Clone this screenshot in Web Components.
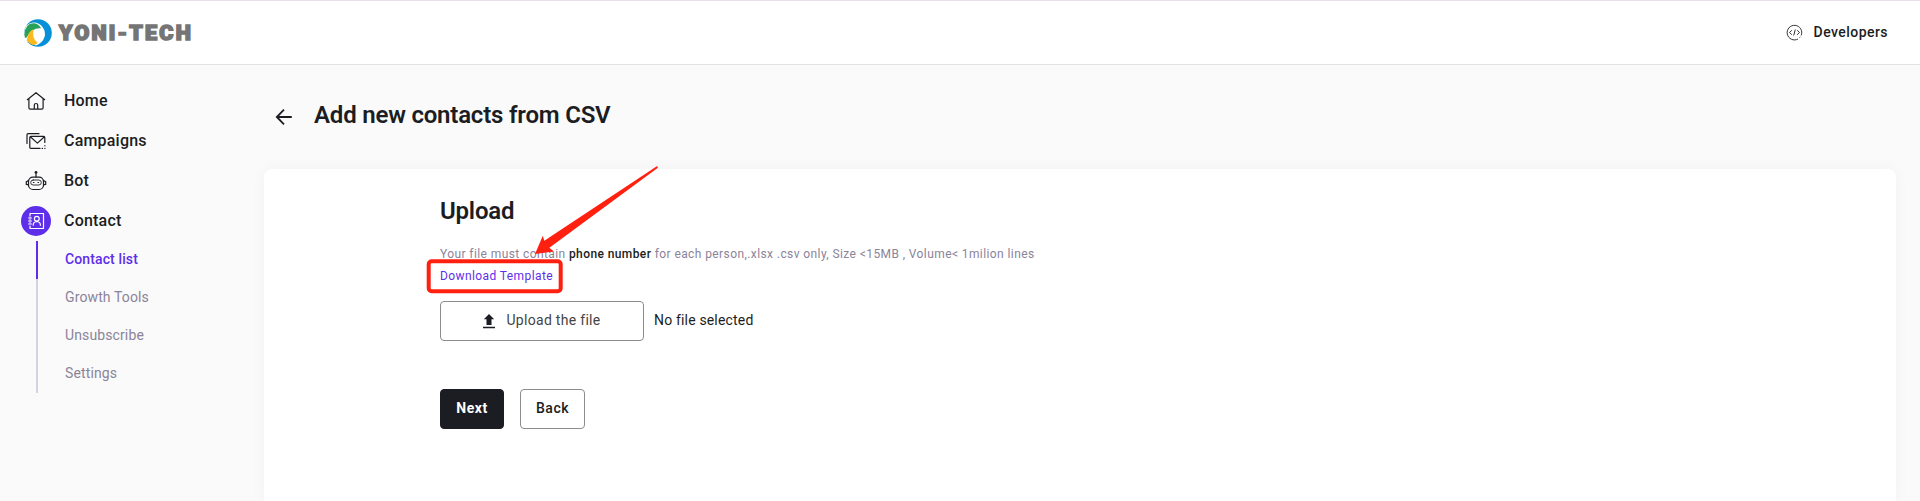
<!DOCTYPE html>
<html lang="en">
<head>
<meta charset="utf-8">
<title>Add new contacts from CSV</title>
<style>
  :root {
    --ink: #1b1d22;
    --muted: #8a8499;
    --purple: #5f2eea;
    --line: #8c8c8c;
    --red: #ff2010;
  }
  html, body { height: 100%; }
  body {
    margin: 0;
    overflow: hidden;
    background: #fafafa;
    color: var(--ink);
    font-family: Roboto, sans-serif;
  }
</style>
</head>
<body>
<app-shell>
  <top-bar slot="header"></top-bar>
  <side-nav slot="nav">
    <nav-item icon="home">Home</nav-item>
    <nav-item icon="mail">Campaigns</nav-item>
    <nav-item icon="bot">Bot</nav-item>
    <nav-item icon="contact" active>Contact</nav-item>
    <sub-nav>
      <sub-item active>Contact list</sub-item>
      <sub-item>Growth Tools</sub-item>
      <sub-item>Unsubscribe</sub-item>
      <sub-item>Settings</sub-item>
    </sub-nav>
  </side-nav>
  <page-title>Add new contacts from CSV</page-title>
  <upload-panel></upload-panel>
</app-shell>

<script>
const icons = {
  home: `<svg width="20" height="20" viewBox="0 0 20 20"><path d="M1.3 8.7 10 1.7l8.7 7M2.9 7.6v9.1q0 1.4 1.4 1.4h11.4q1.4 0 1.4-1.4V7.6M8.3 18v-4q0-1.5 1.7-1.5t1.7 1.5v4"/></svg>`,
  mail: `<svg width="20" height="20" viewBox="0 0 20 20"><path d="M1 12.5V3.8Q1 2.7 2.1 2.7H13M14 17.4H4.9q-1.1 0-1.1-1.1V6.5q0-1.1 1.1-1.1h12.8q1.1 0 1.1 1.1v5M4.3 5.8l7.1 6.3 7-6.3"/><path stroke-dasharray=".3 2.4" d="M16.2 17.4h2.8M18.9 14.5v.3"/></svg>`,
  bot: `<svg width="22" height="20" viewBox="0 0 22 20"><rect x="3.5" y="6.2" width="15" height="12.3" rx="4.5"/><rect x="5.7" y="9" width="10.6" height="5" rx="2.5" stroke-width=".9"/><path d="M11 6V3M1.3 10.5v3M20.7 10.5v3M2.2 10.3l1.2-.8M19.8 10.3l-1.2-.8M2.2 13.7h1M19.8 13.7h-1"/><circle cx="11" cy="1.5" r="1.4" fill="currentColor" stroke="none"/><path d="M8.4 11.5h.5M13 11.5h.5"/></svg>`,
  contact: `<svg width="18" height="18" viewBox="0 0 18 18"><path d="M3 3.5V1.5h13.5v15H3v-2.5"/><path stroke-width="1" d="M1.5 6h3M1.5 9h3M1.5 12h3M3 4.7v.7M3 7.2v.8M3 10v1"/><circle cx="9.8" cy="6.8" r="2.4"/><path d="M6.2 13.2q0-3.4 3.6-3.7 3.6.3 3.6 3.7"/></svg>`
};

function define(name, html, setup) {
  customElements.define(name, class extends HTMLElement {
    constructor() {
      super();
      this.attachShadow({ mode: "open" });
    }

    connectedCallback() {
      this.shadowRoot.innerHTML = html;
      if (setup) setup(this, this.shadowRoot);
    }
  });
}

define("app-shell", `
  <style>
    :host { display: grid; grid-template: 65px 1fr / 264px 1fr; height: 100vh; }
    .header { grid-column: 1 / -1; }
    main { display: flex; flex-direction: column; min-height: 0; padding-right: 24px; }
  </style>
  <div class="header"><slot name="header"></slot></div>
  <slot name="nav"></slot>
  <main><slot></slot></main>
`);

define("brand-logo", `
  <style>
    :host { display: block; height: 30px; }
    svg { display: block; }
    text { font: 900 19.5px Roboto, sans-serif; letter-spacing: 2px; fill: #757575; stroke: #757575; stroke-width: 1.5; }
  </style>
  <svg width="172" height="30" viewBox="0 0 172 30">
    <circle cx="14" cy="15" r="13.8" fill="#0790d8"/>
    <path d="M0 15.5Q1 5 9 4.500q6-.3 9.500 4.500 3.500 5 2 10-2 6-8.500 8.500L0 22z" fill="#fff"/>
    <path d="M.3 16.5Q1.500 5.500 9 5.300q5.500 0 8 5Q9 9 2.500 19.500L1 20z" fill="#27a258"/>
    <path d="M2.700 22.500Q4 13 9.600 11.300 7.500 20 13.500 25q-1.500 2-4.500 2Q5 26 2.700 22.500z" fill="#fbb91c"/>
    <text x="35" y="22" textLength="134" lengthAdjust="spacingAndGlyphs">YONI-TECH</text>
  </svg>
`);

define("top-bar", `
  <style>
    :host {
      display: flex;
      align-items: center;
      justify-content: space-between;
      box-sizing: border-box;
      height: 65px;
      padding: 0 32px 0 24px;
      background: #fff;
      border-top: 1px solid #e8deee;
      border-bottom: 1px solid #e2e2e2;
    }
    .dev { display: flex; align-items: center; gap: 11px; font-size: 14px; font-weight: 500; letter-spacing: .45px; }
    .dev span { padding-bottom: 1px; }
    svg { fill: none; stroke: #333; display: block; }
  </style>
  <brand-logo></brand-logo>
  <div class="dev">
    <svg width="17" height="17" viewBox="0 0 17 17"><path d="M12 15a7.3 7.3 0 1 1 3.2-3.6M14.3 12.8l-.7.8"/><path d="M5.8 6.3 3.5 8.5l2.3 2.2M11.2 6.3l2.3 2.2-2.3 2.2M9.3 5.5l-1.6 6"/></svg>
    <span>Developers</span>
  </div>
`);

define("side-nav", `
  <style>
    :host { display: flex; flex-direction: column; padding: 16px 0 0 21px; }
  </style>
  <slot></slot>
`);

define("nav-item", `
  <style>
    :host { display: flex; align-items: center; gap: 13px; height: 40px; font-size: 16px; font-weight: 500; letter-spacing: .2px; }
    .icon { display: grid; place-items: center; width: 30px; height: 30px; border-radius: 50%; }
    .label { padding-bottom: 2px; }
    :host([active]) .icon { background: var(--purple); color: #fff; }
    svg { fill: none; stroke: currentColor; stroke-width: 1.2; stroke-linecap: round; stroke-linejoin: round; }
  </style>
  <span class="icon"></span>
  <span class="label"><slot></slot></span>
`, (host, root) => {
  root.querySelector(".icon").innerHTML = icons[host.getAttribute("icon")];
});

define("sub-nav", `
  <style>
    :host { display: block; margin-left: 15px; }
  </style>
  <slot></slot>
`);

define("sub-item", `
  <style>
    :host {
      display: flex;
      align-items: center;
      box-sizing: border-box;
      height: 38px;
      padding: 0 0 2px 27px;
      border-left: 2px solid #d6d1e1;
      color: var(--muted);
      font-size: 14px;
      letter-spacing: .12px;
    }
    :host([active]) { border-color: var(--purple); color: var(--purple); font-weight: 500; }
  </style>
  <slot></slot>
`);

define("page-title", `
  <style>
    :host { display: flex; align-items: center; height: 104px; padding-left: 10px; gap: 20px; }
    svg { fill: none; stroke: var(--ink); stroke-width: 1.8; }
    h1 { margin: 0; padding-bottom: 4px; font-size: 24px; font-weight: 600; line-height: 32px; letter-spacing: -.2px; }
  </style>
  <svg width="20" height="20" viewBox="0 0 20 20"><path d="M17.8 10H3M10 2.7 2.8 10l7.2 7.3"/></svg>
  <h1><slot></slot></h1>
`);

define("outline-button", `
  <style>
    :host { display: block; }
    button {
      display: flex;
      align-items: center;
      justify-content: center;
      gap: 11px;
      box-sizing: border-box;
      width: 100%;
      height: 40px;
      padding: 0 0 2px;
      border: 1px solid var(--line);
      border-radius: 4px;
      background: #fff;
      color: var(--ink);
      font: 500 14px Roboto, sans-serif;
      letter-spacing: inherit;
    }
    :host([primary]) button { background: var(--ink); border-color: var(--ink); color: #fff; font-weight: 700; }
    :host([light]) button { font-weight: 400; color: #444; }
    ::slotted(svg) { margin-top: 2px; }
  </style>
  <button><slot></slot></button>
`);

define("callout-mark", `
  <style>
    :host { position: absolute; left: 426px; top: 160px; pointer-events: none; }
    svg { display: block; fill: var(--red); }
    rect { fill: none; stroke: var(--red); stroke-width: 4; }
  </style>
  <svg width="240" height="136" viewBox="0 0 240 136">
    <path d="M230.8 6.3 118.3 80.7l-1.5-4.9L109 94l18.9-2.5-4.5-3.8L231.6 8q.8-1.4-.8-1.7z"/>
    <rect x="2.7" y="101.2" width="132" height="30" rx="3"/>
  </svg>
`);

define("upload-panel", `
  <style>
    :host {
      display: block;
      box-sizing: border-box;
      flex: 1;
      padding: 26px 176px 0;
      border-radius: 8px 8px 0 0;
      background: #fff;
      box-shadow: 0 0 16px rgba(0, 0, 0, .04);
    }
    h2 { margin: 0; font-size: 24px; font-weight: 600; line-height: 32px; letter-spacing: -.2px; }
    .hint { margin: 16px 0 0; color: var(--muted); font-size: 12px; line-height: 22px; letter-spacing: .405px; }
    .hint b { color: var(--ink); font-weight: 500; }
    a { color: var(--purple); text-decoration: none; }
    .file { display: flex; align-items: center; gap: 10px; margin-top: 14px; font-size: 14px; letter-spacing: .17px; }
    .file outline-button { width: 204px; letter-spacing: .3px; }
    .status { padding-bottom: 2px; }
    .actions { display: flex; gap: 16px; margin-top: 48px; letter-spacing: .5px; }
    .next { width: 64px; }
    .back { width: 65px; }
  </style>
  <h2>Upload</h2>
  <p class="hint">Your file must contain <b>phone number</b> for each person,.xlsx .csv only, Size &lt;15MB , Volume&lt; 1milion lines<br><a>Download Template</a></p>
  <div class="file">
    <outline-button light>
      <svg width="12" height="15" viewBox="0 0 12 15" fill="#1b1d22"><path d="M6 0 .8 5.3h2.7V11h5V5.3h2.7zM0 12.8h12v1.5H0z"/></svg>
      <span>Upload the file</span>
    </outline-button>
    <span class="status">No file selected</span>
  </div>
  <div class="actions">
    <outline-button class="next" primary>Next</outline-button>
    <outline-button class="back">Back</outline-button>
  </div>
  <callout-mark></callout-mark>
`);
</script>
</body>
</html>
